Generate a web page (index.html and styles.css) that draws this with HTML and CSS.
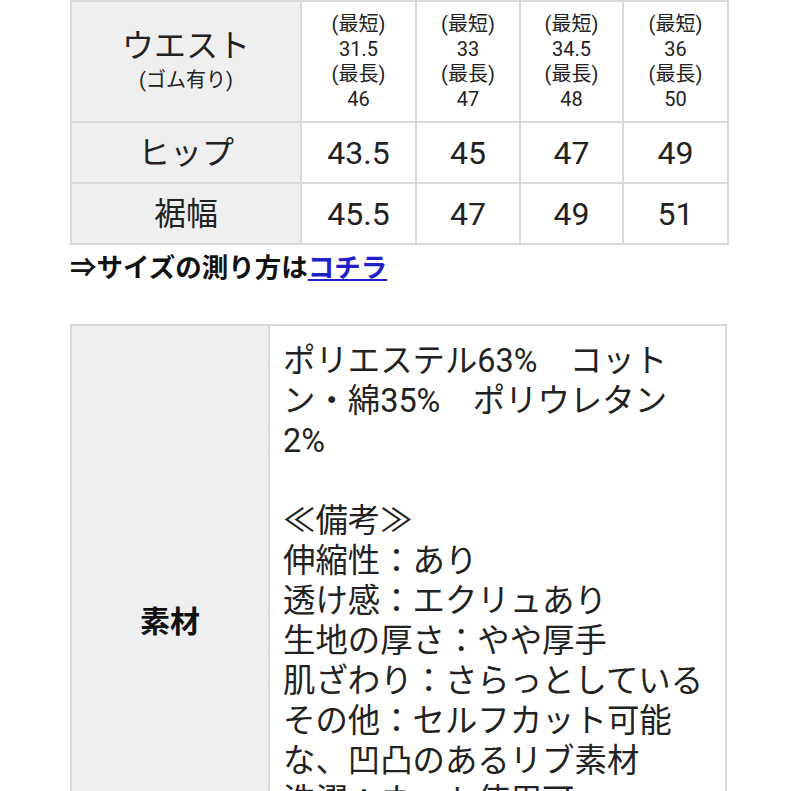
FILE: index.html
```html
<!DOCTYPE html>
<html lang="ja">
<head>
<meta charset="utf-8">
<link rel="stylesheet" href="styles.css">
</head>
<body>
<div class="page">
  <table class="size">
    <colgroup>
      <col class="c-head"><col class="c1"><col class="c2"><col class="c3"><col class="c4">
    </colgroup>
    <tr class="r-waist">
      <th><span class="big">ウエスト</span><span class="small">(ゴム有り)</span></th>
      <td class="multi">(最短)<br>31.5<br>(最長)<br>46</td>
      <td class="multi">(最短)<br>33<br>(最長)<br>47</td>
      <td class="multi">(最短)<br>34.5<br>(最長)<br>48</td>
      <td class="multi">(最短)<br>36<br>(最長)<br>50</td>
    </tr>
    <tr class="r-row">
      <th><span class="big">ヒップ</span></th>
      <td>43.5</td><td>45</td><td>47</td><td>49</td>
    </tr>
    <tr class="r-row">
      <th><span class="big">裾幅</span></th>
      <td>45.5</td><td>47</td><td>49</td><td>51</td>
    </tr>
  </table>

  <p class="howto">⇒サイズの測り方は<a href="#">コチラ</a></p>

  <table class="material">
    <tr>
      <th>素材</th>
      <td>ポリエステル63%　コットン・綿35%　ポリウレタン2%<br><br>≪備考≫<br>伸縮性：あり<br>透け感：エクリュあり<br>生地の厚さ：やや厚手<br>肌ざわり：さらっとしている<br>その他：セルフカット可能な、凹凸のあるリブ素材<br>洗濯：ネット使用可<br>裏地：なし<br>ポケット：あり</td>
    </tr>
  </table>
</div>
</body>
</html>
```
FILE: styles.css
```css
html, body {
  margin: 0;
  padding: 0;
  background: #fff;
}
body {
  font-family: "Roboto", "Noto Sans CJK JP", sans-serif;
  color: #222;
}
.page {
  padding-left: 70px;
  width: 657px;
}
table {
  border-collapse: collapse;
  width: 657px;
  table-layout: fixed;
}
th, td {
  border: 2px solid #d9d9d9;
  padding: 0;
}
th {
  background: #efefef;
  font-weight: normal;
}
.c-head { width: 230px; }
.c1 { width: 115px; }
.c2 { width: 104px; }
.c3 { width: 103px; }
.c4 { width: 105px; }

.size td {
  text-align: center;
  font-size: 32px;
}
.size .r-waist { height: 121px; }
.size .r-row { height: 61px; }
.size td.multi {
  font-size: 20px;
  line-height: 25px;
}
.big {
  display: block;
  font-size: 32px;
  line-height: 38px;
}
.small {
  display: block;
  font-size: 20px;
  line-height: 26px;
}
.r-waist .big { margin-top: -4px; }
.r-waist .small { margin-top: 2px; }

.howto {
  margin: 5px 0 0;
  font-size: 26.5px;
  line-height: 36px;
  font-weight: bold;
  color: #111;
}
.howto a {
  color: #2020c8;
  text-decoration: underline;
}

.material {
  margin-top: 38px;
}
.material th {
  width: 196px;
  font-size: 30px;
  font-weight: bold;
  color: #111;
}
.material td {
  font-size: 32.4px;
  line-height: 40px;
  padding: 15px 20px 11px 13px;
  vertical-align: top;
}
```
